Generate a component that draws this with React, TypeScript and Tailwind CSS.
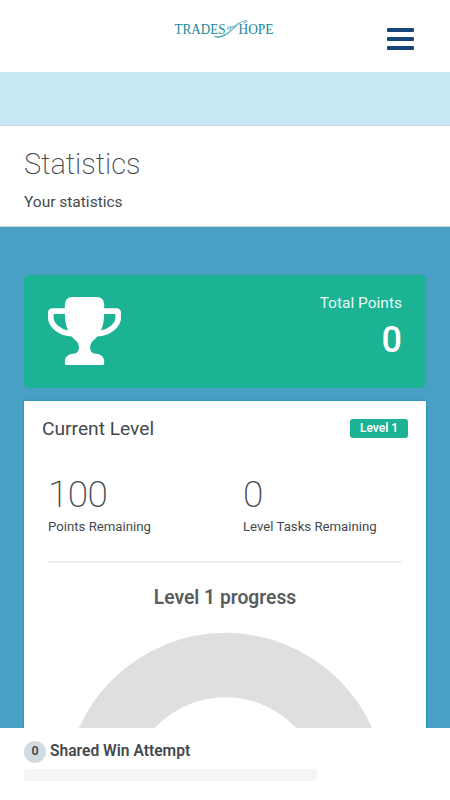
function Logo() {
  return (
    <svg className="h-6 w-[104px]" viewBox="0 0 104 24" fill="#16899b" role="img" aria-label="Trades of Hope">
      <g fontFamily="'Liberation Serif', serif">
        <text x="1.5" y="17.5" fontSize="14" textLength="51" lengthAdjust="spacingAndGlyphs">TRADES</text>
        <text x="65.5" y="17.5" fontSize="14" textLength="35" lengthAdjust="spacingAndGlyphs">HOPE</text>
        <text x="54" y="14" fontSize="8" fontStyle="italic">o</text>
      </g>
      <g fill="none" stroke="#16899b" strokeLinecap="round">
        <path d="M41 20C43 23 52 20.5 57 16C62 12 66 5.5 73 4.5C75 4.5 74 6.5 71 7" strokeWidth=".7" />
        <path d="M43 21C53 21.5 60 10.5 66 6.5M57 11.5L63 10" strokeWidth=".6" />
      </g>
    </svg>
  );
}

function Trophy() {
  return (
    <svg className="h-[68px] w-[73px]" viewBox="64 128 1664 1536" preserveAspectRatio="none" fill="white" aria-hidden="true">
      <path d="M522 883q-74-162-74-371h-256v96q0 78 94.5 162t235.5 113zm1078-275v-96h-256q0 209-74 371 141-29 235.5-113t94.5-162zm128-128v128q0 71-41.5 143t-112 130-173 97.5-215.5 44.5q-42 54-95 95-38 34-52.5 72.5t-14.5 89.5q0 54 30.5 91t97.5 37q75 0 133.5 45.5t58.5 114.5v64q0 14-9 23t-23 9h-832q-14 0-23-9t-9-23v-64q0-69 58.5-114.5t133.5-45.5q67 0 97.5-37t30.5-91q0-51-14.5-89.5t-52.5-72.5q-53-41-95-95-113-5-215.5-44.5t-173-97.5-112-130-41.5-143v-128q0-40 28-68t68-28h288v-96q0-66 47-113t113-47h576q66 0 113 47t47 113v96h288q40 0 68 28t28 68z" />
    </svg>
  );
}

function Stat({ value, label }: { value: string; label: string }) {
  return (
    <div>
      <div className="text-[37px] font-extralight leading-[40px] tracking-[-0.6px]">{value}</div>
      <div className="mt-0.5 text-[13.2px] leading-5">{label}</div>
    </div>
  );
}

export default function App() {
  return (
    <div className="flex h-[800px] w-full flex-col overflow-hidden bg-white font-['Roboto',sans-serif] text-[#43494d]">
      <header className="grid h-[72px] shrink-0 grid-cols-[1fr_104px_1fr] items-start pt-4">
        <span />
        <Logo />
        <button className="mt-3 mr-9 flex w-[27px] flex-col gap-[5px] justify-self-end" aria-label="Menu">
          <span className="h-1 w-full rounded-[1px] bg-[#174679]" />
          <span className="h-1 w-full rounded-[1px] bg-[#174679]" />
          <span className="h-1 w-full rounded-[1px] bg-[#174679]" />
        </button>
      </header>
      <div className="h-[53px] shrink-0 bg-[#c6e9f5]" />
      <section className="h-[102px] shrink-0 border-y border-[#c9d6db] px-6 pt-[22px]">
        <h1 className="text-[29px] font-extralight leading-8">Statistics</h1>
        <p className="mt-3 text-[15.5px] leading-5">Your statistics</p>
      </section>
      <main className="flex min-h-0 flex-1 flex-col overflow-hidden bg-[#48a1c4] px-6 pt-12">
        <section className="flex h-[113px] shrink-0 justify-between rounded-[5px] bg-[#1bb394] px-6 pt-[22px] text-white">
          <Trophy />
          <div className="text-right">
            <div className="-mt-1 text-[15.5px] leading-5 text-white/90">Total Points</div>
            <div className="mt-[7px] text-[36px] font-medium leading-10">0</div>
          </div>
        </section>
        <section className="mt-[13px] h-[400px] shrink-0 bg-white shadow-[0_0_2px_#087e9f]">
          <div className="flex items-start justify-between px-[18px] pt-[17px]">
            <h2 className="-mt-px text-[19.2px] leading-6">Current Level</h2>
            <span className="mt-px flex h-[19px] w-[58px] items-center justify-center rounded-[3px] bg-[#1bb394] pb-0.5 text-[12px] font-semibold text-white">Level 1</span>
          </div>
          <div className="mx-6 mt-[34px] grid h-[88px] grid-cols-[195px_1fr] border-b-2 border-[#eeeff0]">
            <Stat value="100" label="Points Remaining" />
            <Stat value="0" label="Level Tasks Remaining" />
          </div>
          <h3 className="mt-[23px] text-center text-[19.3px] font-semibold leading-6 text-[#595d60]">Level 1 progress</h3>
          <svg className="mx-auto mt-[22px] block h-[322px] w-[322px]" viewBox="0 0 322 322">
            <circle cx="161.5" cy="161.5" r="128.5" fill="none" stroke="#dfdfdf" strokeWidth="64.3" />
          </svg>
        </section>
      </main>
      <footer className="h-[72px] shrink-0 px-6 pt-3">
        <div className="flex h-[23px] items-center gap-1">
          <span className="mt-px flex h-[22px] w-[22px] items-center justify-center rounded-full bg-[#d1dade] pb-px text-[12.5px] font-semibold">0</span>
          <span className="text-[15.6px] font-semibold">Shared Win Attempt</span>
        </div>
        <div className="mt-[6px] h-3 w-[293px] rounded-[4px] bg-[#f5f5f5]" />
      </footer>
    </div>
  );
}
